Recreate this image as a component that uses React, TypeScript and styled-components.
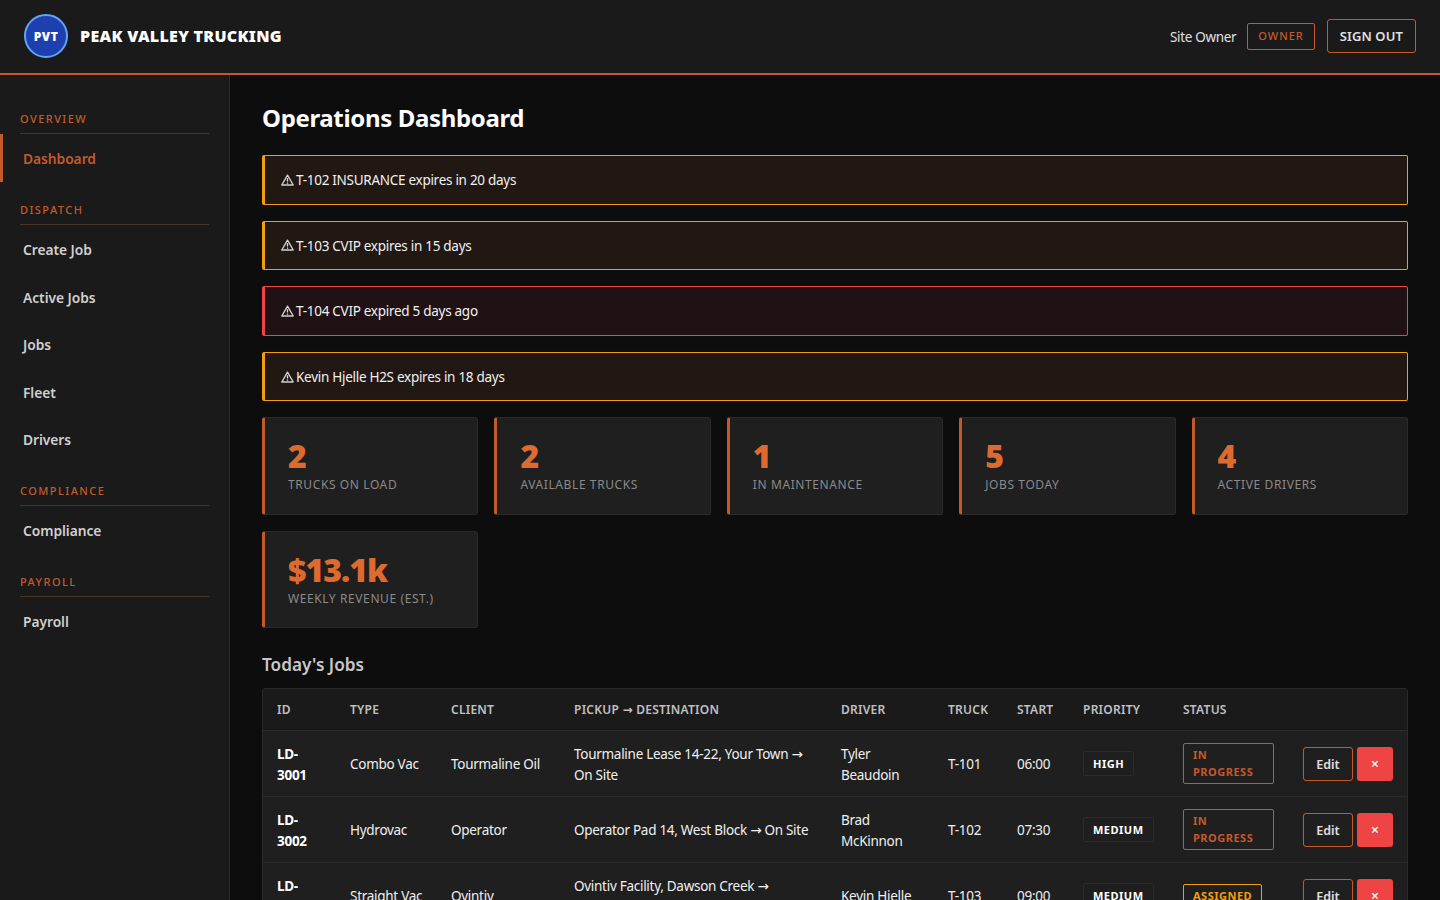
import React from "react";
import styled, { createGlobalStyle } from "styled-components";

const ORANGE = "#c45a2a";
const AMBER = "#f59e0b";
const RED = "#ef4444";
const BODY_TRACKING = "-0.28px";

const GlobalStyle = createGlobalStyle`
  * {
    box-sizing: border-box;
  }

  html,
  body {
    margin: 0;
    height: 100%;
    overflow: hidden;
    background: #0d0d0d;
    color: #f0f0f0;
    font-family: "Noto Sans", "Open Sans", sans-serif;
  }
`;

type Alert = { text: string; level: "warn" | "danger" };
type Job = {
  id: string;
  type: string;
  client: string;
  from: string;
  to: string;
  driver: string;
  truck: string;
  start: string;
  priority: string;
  status: string;
  assigned?: boolean;
};

const NAV = [
  { title: "Overview", items: ["Dashboard"] },
  { title: "Dispatch", items: ["Create Job", "Active Jobs", "Jobs", "Fleet", "Drivers"] },
  { title: "Compliance", items: ["Compliance"] },
  { title: "Payroll", items: ["Payroll"] }
];

const ALERTS: Alert[] = [
  { text: "T-102 INSURANCE expires in 20 days", level: "warn" },
  { text: "T-103 CVIP expires in 15 days", level: "warn" },
  { text: "T-104 CVIP expired 5 days ago", level: "danger" },
  { text: "Kevin Hjelle H2S expires in 18 days", level: "warn" }
];

const STATS = [
  { value: "2", label: "Trucks on Load" },
  { value: "2", label: "Available Trucks" },
  { value: "1", label: "In Maintenance" },
  { value: "5", label: "Jobs Today" },
  { value: "4", label: "Active Drivers" },
  { value: "$13.1k", label: "Weekly Revenue (Est.)" }
];

const COLUMNS = [
  { label: "ID", width: 73 },
  { label: "Type", width: 101 },
  { label: "Client", width: 123 },
  { label: "Pickup", arrowTo: "Destination", width: 267 },
  { label: "Driver", width: 107 },
  { label: "Truck", width: 69 },
  { label: "Start", width: 66 },
  { label: "Priority", width: 100 },
  { label: "Status", width: 120 },
  { label: "", width: 118 }
];

const JOBS: Job[] = [
  {
    id: "LD-3001",
    type: "Combo Vac",
    client: "Tourmaline Oil",
    from: "Tourmaline Lease 14-22, Your Town",
    to: "On\u00a0Site",
    driver: "Tyler Beaudoin",
    truck: "T-101",
    start: "06:00",
    priority: "High",
    status: "In Progress"
  },
  {
    id: "LD-3002",
    type: "Hydrovac",
    client: "Operator",
    from: "Operator Pad 14, West Block",
    to: "On\u00a0Site",
    driver: "Brad McKinnon",
    truck: "T-102",
    start: "07:30",
    priority: "Medium",
    status: "In Progress"
  },
  {
    id: "LD-3003",
    type: "Straight Vac",
    client: "Ovintiv",
    from: "Ovintiv Facility, Dawson Creek",
    to: "On\u00a0Site",
    driver: "Kevin Hjelle",
    truck: "T-103",
    start: "09:00",
    priority: "Medium",
    status: "Assigned",
    assigned: true
  }
];

const WarnIcon = () => (
  <WarnSvg viewBox="0 0 13 12" aria-hidden="true">
    <path d="M6.5 1.2 12.2 11H.8Z" fill="none" stroke="#cfcfcf" strokeWidth="1.4" strokeLinejoin="round" />
    <path d="M6.5 4.2v3.4M6.5 8.4v1.3" stroke="#e0e0e0" strokeWidth="1.3" />
  </WarnSvg>
);

export default function App() {
  return (
    <>
      <GlobalStyle />
      <Shell>
        <TopBar>
          <Brand>
            <Logo>PVT</Logo>
            <BrandName>PEAK VALLEY TRUCKING</BrandName>
          </Brand>
          <UserArea>
            <UserName>Site Owner</UserName>
            <RoleTag>OWNER</RoleTag>
            <SignOut>SIGN OUT</SignOut>
          </UserArea>
        </TopBar>
        <Body>
          <Sidebar>
            {NAV.map((section) => (
              <NavSection key={section.title}>
                <NavTitle>{section.title}</NavTitle>
                {section.items.map((item) => (
                  <NavItem key={item} $active={item === "Dashboard"}>
                    {item}
                  </NavItem>
                ))}
              </NavSection>
            ))}
          </Sidebar>
          <Main>
            <PageTitle>Operations Dashboard</PageTitle>
            {ALERTS.map((alert) => (
              <AlertBox key={alert.text} $level={alert.level}>
                <WarnIcon />
                {alert.text}
              </AlertBox>
            ))}
            <StatGrid>
              {STATS.map((stat) => (
                <StatCard key={stat.label}>
                  <StatValue>{stat.value}</StatValue>
                  <StatLabel>{stat.label}</StatLabel>
                </StatCard>
              ))}
            </StatGrid>
            <SectionTitle>Today's Jobs</SectionTitle>
            <TableWrap>
              <JobsTable>
                <thead>
                  <tr>
                    {COLUMNS.map((col) => (
                      <HeadCell key={col.label} $width={col.width}>
                        {col.label}
                        {col.arrowTo && (
                          <>
                            {" "}
                            <Arrow>→</Arrow> {col.arrowTo}
                          </>
                        )}
                      </HeadCell>
                    ))}
                  </tr>
                </thead>
                <tbody>
                  {JOBS.map((job) => (
                    <tr key={job.id}>
                      <IdCell>{job.id}</IdCell>
                      <TextCell>{job.type}</TextCell>
                      <TextCell>{job.client}</TextCell>
                      <TextCell>
                        {job.from} <Arrow>→</Arrow> {job.to}
                      </TextCell>
                      <TextCell>{job.driver}</TextCell>
                      <TextCell>{job.truck}</TextCell>
                      <TextCell>{job.start}</TextCell>
                      <Cell>
                        <PriorityTag>{job.priority}</PriorityTag>
                      </Cell>
                      <Cell>
                        <StatusTag $assigned={job.assigned}>{job.status}</StatusTag>
                      </Cell>
                      <Cell>
                        <Actions>
                          <EditButton>Edit</EditButton>
                          <DeleteButton>×</DeleteButton>
                        </Actions>
                      </Cell>
                    </tr>
                  ))}
                </tbody>
              </JobsTable>
            </TableWrap>
          </Main>
        </Body>
      </Shell>
    </>
  );
}

const Shell = styled.div`
  height: 100vh;
  display: flex;
  flex-direction: column;
  overflow: hidden;
`;

const TopBar = styled.header`
  flex: 0 0 75px;
  display: flex;
  align-items: center;
  justify-content: space-between;
  padding: 0 24px 1px;
  background: #1a1a1a;
  border-bottom: 2px solid ${ORANGE};
`;

const Brand = styled.div`
  display: flex;
  align-items: center;
  gap: 12px;
`;

const Logo = styled.div`
  width: 44px;
  height: 44px;
  border-radius: 50%;
  display: flex;
  align-items: center;
  justify-content: center;
  background: #1e40af;
  border: 2px solid #60a5fa;
  color: #fff;
  font-size: 12px;
  font-weight: 900;
  letter-spacing: 0.5px;
`;

const BrandName = styled.div`
  color: #fff;
  font-size: 16px;
  font-weight: 900;
  letter-spacing: 0.3px;
`;

const UserArea = styled.div`
  display: flex;
  align-items: center;
  gap: 12px;
`;

const UserName = styled.span`
  margin: 2px -1px 0 0;
  color: #e0e0e0;
  font-size: 13.5px;
  letter-spacing: -0.32px;
`;

const RoleTag = styled.span`
  padding: 3px 10px 5px;
  border: 1px solid ${ORANGE};
  border-radius: 2px;
  color: ${ORANGE};
  font-size: 11px;
  font-weight: 500;
  letter-spacing: 1px;
  line-height: 17px;
`;

const SignOut = styled.button`
  height: 34px;
  padding: 0 12px;
  border: 1px solid ${ORANGE};
  border-radius: 3px;
  background: transparent;
  color: #e0e0e0;
  font-family: inherit;
  font-size: 13px;
  font-weight: 600;
  letter-spacing: 0.1px;
`;

const Body = styled.div`
  flex: 1;
  display: flex;
  min-height: 0;
`;

const Sidebar = styled.aside`
  flex: 0 0 230px;
  padding-top: 36px;
  background: #1a1a1a;
  border-right: 1px solid #2a2a2a;
`;

const NavSection = styled.nav`
  margin-bottom: 20.5px;
`;

const NavTitle = styled.div`
  margin: 0 20px;
  padding-bottom: 6px;
  border-bottom: 1px solid #4a3524;
  color: ${ORANGE};
  font-size: 11px;
  font-weight: 500;
  letter-spacing: 1.45px;
  line-height: 16px;
  text-transform: uppercase;
`;

const NavItem = styled.div<{ $active?: boolean }>`
  height: 47.5px;
  display: flex;
  align-items: center;
  padding: 1.6px 0 0 20px;
  border-left: 3px solid ${(p) => (p.$active ? ORANGE : "transparent")};
  color: ${(p) => (p.$active ? ORANGE : "#d0d0d0")};
  font-size: 13.8px;
  font-weight: 600;
  letter-spacing: -0.05px;
`;

const Main = styled.main`
  flex: 1;
  min-width: 0;
  padding: 23px 32px;
  background: #0d0d0d;
  overflow: hidden;
`;

const PageTitle = styled.h1`
  margin: 0 0 17px;
  color: #fff;
  font-size: 24px;
  font-weight: 700;
  letter-spacing: -0.35px;
  line-height: 40px;
`;

const AlertBox = styled.div<{ $level: Alert["level"] }>`
  display: flex;
  align-items: center;
  gap: 2px;
  margin-bottom: 16px;
  padding: 17px 16px 15px;
  border: 1px solid ${(p) => (p.$level === "danger" ? RED : AMBER)};
  border-left-width: 3px;
  border-radius: 2px;
  background: ${(p) => (p.$level === "danger" ? "#201114" : "#211814")};
  color: #f0f0f0;
  font-size: 13.5px;
  letter-spacing: ${BODY_TRACKING};
  line-height: 15.6px;
`;

const WarnSvg = styled.svg`
  width: 13px;
  height: 12px;
  margin-top: -2px;
  flex: none;
`;

const StatGrid = styled.div`
  display: grid;
  grid-template-columns: repeat(5, 1fr);
  gap: 16px;
  margin-bottom: 24px;
`;

const StatCard = styled.div`
  padding: 20px 23px 20.3px;
  background: #1f1f1f;
  border: 1px solid #2a2a2a;
  border-left: 3px solid ${ORANGE};
  border-radius: 3px;
`;

const StatValue = styled.div`
  color: #dd6a2e;
  font-size: 32px;
  font-weight: 900;
  letter-spacing: -1px;
  line-height: 36px;
`;

const StatLabel = styled.div`
  margin-top: 3px;
  color: #8a8a8a;
  font-size: 12px;
  letter-spacing: 0.6px;
  line-height: 16px;
  text-transform: uppercase;
`;

const SectionTitle = styled.h2`
  margin: 0 0 10px;
  color: #c8c8c8;
  font-size: 17.2px;
  font-weight: 600;
  line-height: 26px;
`;

const TableWrap = styled.div`
  border: 1px solid #2a2a2a;
  border-radius: 3px;
  overflow: hidden;
`;

const JobsTable = styled.table`
  width: 100%;
  table-layout: fixed;
  border-collapse: collapse;
`;

const HeadCell = styled.th<{ $width: number }>`
  width: ${(p) => p.$width}px;
  height: 42px;
  padding: 0 14px;
  background: #1a1a1a;
  border-bottom: 1px solid #2a2a2a;
  color: #c0c0c0;
  font-size: 12px;
  font-weight: 600;
  letter-spacing: 0.25px;
  text-align: left;
  text-transform: uppercase;
  white-space: nowrap;
`;

const Arrow = styled.span`
  font-family: "DejaVu Sans", sans-serif;
  line-height: 1;
`;

const Cell = styled.td`
  height: 66px;
  padding: 1px 14px 1px;
  background: #1f1f1f;
  border-bottom: 1px solid #2a2a2a;
  color: #f0f0f0;
  font-size: 13.5px;
  letter-spacing: ${BODY_TRACKING};
  line-height: 21px;
`;

const TextCell = styled(Cell)`
  padding-top: 3px;
`;

const IdCell = styled(TextCell)`
  color: #fff;
  font-weight: 700;
`;

const PriorityTag = styled.span`
  display: inline-block;
  padding: 3px 9px;
  border: 1px solid #2a2a2a;
  border-radius: 2px;
  color: #fff;
  font-size: 11px;
  font-weight: 700;
  letter-spacing: 0.5px;
  line-height: 17px;
  text-transform: uppercase;
  white-space: nowrap;
`;

const StatusTag = styled.span<{ $assigned?: boolean }>`
  display: inline-block;
  max-width: 91px;
  padding: 2px 9px 3px;
  border: 1px solid ${(p) => (p.$assigned ? AMBER : ORANGE)};
  border-radius: 2px;
  color: ${(p) => (p.$assigned ? AMBER : ORANGE)};
  font-size: 11px;
  font-weight: 700;
  letter-spacing: 0.5px;
  line-height: 17px;
  text-transform: uppercase;
`;

const Actions = styled.div`
  display: flex;
  gap: 4px;
`;

const EditButton = styled.button`
  width: 50px;
  height: 34px;
  padding-top: 2px;
  border: 1px solid ${ORANGE};
  border-radius: 3px;
  background: transparent;
  color: #e0e0e0;
  font-family: inherit;
  font-size: 12.5px;
  font-weight: 600;
`;

const DeleteButton = styled.button`
  width: 36px;
  height: 34px;
  border: 0;
  border-radius: 3px;
  background: ${RED};
  color: #fff;
  font-family: inherit;
  font-size: 14px;
  font-weight: 600;
`;
